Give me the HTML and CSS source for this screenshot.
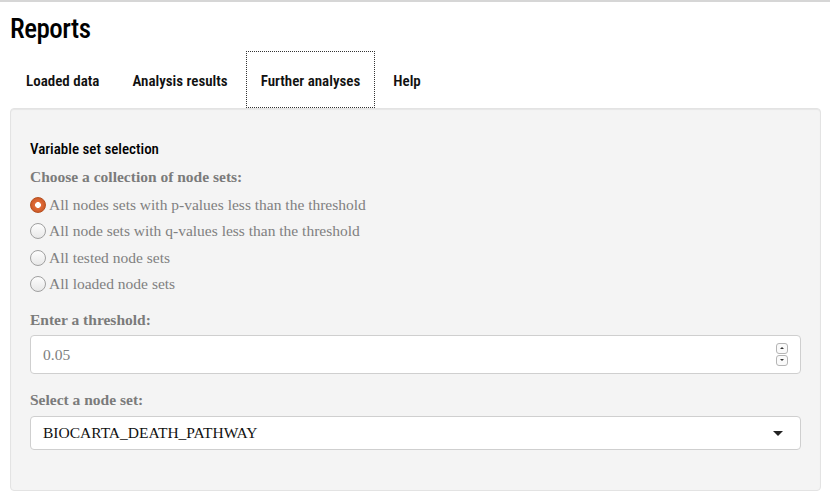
FILE: index.html
```html
<!DOCTYPE html>
<html>
<head>
<meta charset="utf-8">
<link rel="stylesheet" href="styles.css">
</head>
<body>
<div class="page">
  <h1 class="title">Reports</h1>
  <ul class="tabs">
    <li class="tab">Loaded data</li>
    <li class="tab">Analysis results</li>
    <li class="tab active">Further analyses</li>
    <li class="tab">Help</li>
  </ul>
  <div class="well">
    <div class="section-title">Variable set selection</div>
    <div class="label">Choose a collection of node sets:</div>
    <div class="radios">
      <div class="radio-row"><span class="radio checked"></span><span class="radio-text">All nodes sets with p-values less than the threshold</span></div>
      <div class="radio-row"><span class="radio"></span><span class="radio-text">All node sets with q-values less than the threshold</span></div>
      <div class="radio-row"><span class="radio"></span><span class="radio-text">All tested node sets</span></div>
      <div class="radio-row"><span class="radio"></span><span class="radio-text">All loaded node sets</span></div>
    </div>
    <div class="label label-threshold">Enter a threshold:</div>
    <div class="input">
      <span class="input-value">0.05</span>
      <span class="spinner">
        <span class="spin up"></span>
        <span class="spin down"></span>
      </span>
    </div>
    <div class="label label-select">Select a node set:</div>
    <div class="select">
      <span class="select-value">BIOCARTA_DEATH_PATHWAY</span>
      <span class="caret"></span>
    </div>
  </div>
</div>
</body>
</html>
```

FILE: styles.css
```css
html, body {
  margin: 0;
  padding: 0;
  background: #fff;
}
body {
  border-top: 2px solid #d6d6d6;
  font-family: "Liberation Serif", "Times New Roman", serif;
}
.page {
  padding: 0 9px 0 10px;
  display: flex;
  flex-direction: column;
}
.title {
  margin: 0;
  padding-top: 10px;
  height: 39px;
  font-family: "Roboto", "DejaVu Sans Condensed", sans-serif;
  font-stretch: 75%;
  font-weight: 500;
  font-size: 27px;
  line-height: 34px;
  letter-spacing: -0.5px;
  color: #000;
}
.tabs {
  list-style: none;
  margin: 0;
  padding: 0 0 0 1px;
  display: flex;
  gap: 3px;
  height: 57px;
}
.tab {
  padding: 3px 14px 0 14px;
  height: 57px;
  display: flex;
  align-items: center;
  font-family: "Roboto", "DejaVu Sans Condensed", sans-serif;
  font-stretch: 81%;
  font-size: 15px;
  font-weight: 600;
  color: #111;
  box-sizing: border-box;
  border: 1px solid transparent;
}
.tab.active {
  border: 1px dotted #333;
}
.well {
  background: #f4f4f4;
  border: 1px solid #e3e3e3;
  border-radius: 4px;
  box-shadow: inset 0 1px 1px rgba(0,0,0,0.06);
  padding: 30px 19px 40px 19px;
  display: flex;
  flex-direction: column;
}
.section-title {
  font-family: "Roboto", "DejaVu Sans Condensed", sans-serif;
  font-stretch: 80%;
  font-weight: 500;
  font-size: 15px;
  line-height: 20px;
  color: #000;
}
.label {
  font-weight: bold;
  font-size: 15.5px;
  line-height: 20px;
  color: #7b7b7b;
  margin-top: 8px;
}
.radios {
  display: flex;
  flex-direction: column;
  margin-top: 5px;
}
.radio-row {
  display: flex;
  align-items: center;
  height: 26.3px;
  font-size: 15.5px;
  color: #808080;
}
.radio {
  width: 16px;
  height: 16px;
  border-radius: 50%;
  border: 1px solid #a0a0a0;
  background: linear-gradient(#fdfdfd, #e8e8e8);
  margin: 0 3px 0 0;
  box-sizing: border-box;
  flex: none;
}
.radio.checked {
  border-color: #b5501f;
  background: radial-gradient(circle at 50% 50%, #fff 0 2.6px, #e06c3a 3.2px, #c24e1c 100%);
}
.label-threshold {
  margin-top: 13px;
}
.input {
  margin-top: 5px;
  height: 39px;
  background: #fff;
  border: 1px solid #cfcfcf;
  border-radius: 4px;
  box-sizing: border-box;
  display: flex;
  align-items: center;
  justify-content: space-between;
  padding: 0 12px 0 12px;
}
.input-value {
  font-size: 15.5px;
  color: #808080;
}
.spinner {
  display: flex;
  flex-direction: column;
  gap: 1px;
}
.spin {
  width: 12px;
  height: 11px;
  border: 1px solid #b5b5b5;
  border-radius: 3px;
  box-sizing: border-box;
  background: #fafafa;
  position: relative;
}
.spin::after {
  content: "";
  position: absolute;
  left: 3px;
  top: 3px;
  border-left: 2px solid transparent;
  border-right: 2px solid transparent;
}
.spin.up::after {
  border-bottom: 2px solid #333;
}
.spin.down::after {
  border-top: 2px solid #333;
}
.label-select {
  margin-top: 16px;
}
.select {
  margin-top: 6px;
  height: 34px;
  background: #fff;
  border: 1px solid #cfcfcf;
  border-radius: 4px;
  box-sizing: border-box;
  display: flex;
  align-items: center;
  justify-content: space-between;
  padding: 0 17px 0 12px;
}
.select-value {
  font-size: 15.5px;
  color: #111;
}
.caret {
  width: 0;
  height: 0;
  border-left: 5px solid transparent;
  border-right: 5px solid transparent;
  border-top: 5px solid #222;
}
```
